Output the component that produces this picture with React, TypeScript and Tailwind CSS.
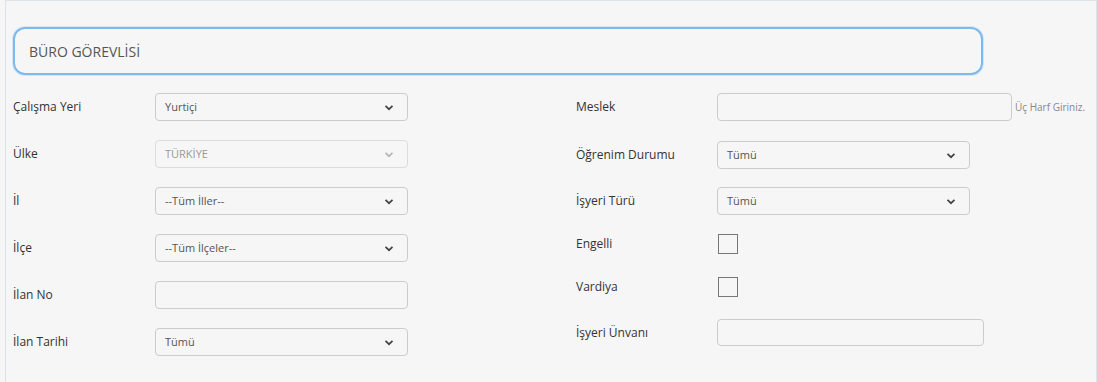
import React from "react";

const Chevron = ({ muted }: { muted?: boolean }) => (
  <svg width="10" height="7" viewBox="0 0 10 7" className="shrink-0">
    <path d="M1.5 1.8 L5 5.2 L8.5 1.8" fill="none" stroke={muted ? "#b5b5b5" : "#444"} strokeWidth="1.7" />
  </svg>
);

const Select = ({ value, width, disabled }: { value: string; width: string; disabled?: boolean }) => (
  <div
    className={`${width} h-[28px] flex items-center justify-between pl-[9px] pr-[13px] rounded-[4px] border ${
      disabled ? "border-[#dcdcdc] text-[#999]" : "border-[#ccc] text-[#555]"
    } bg-[#f6f6f6] text-[11px]`}
  >
    <span>{value}</span>
    <Chevron muted={disabled} />
  </div>
);

const TextBox = ({ width, height = "h-[28px]" }: { width: string; height?: string }) => (
  <div className={`${width} ${height} rounded-[4px] border border-[#ccc] bg-[#f6f6f6]`} />
);

const Checkbox = () => <div className="w-[20px] h-[20px] border border-[#777] bg-[#f6f6f6]" />;

export default function App() {
  const leftRows = [
    { label: "Çalışma Yeri", el: <Select value="Yurtiçi" width="w-[253px]" /> },
    { label: "Ülke", el: <Select value="TÜRKİYE" width="w-[253px]" disabled /> },
    { label: "İl", el: <Select value="--Tüm İller--" width="w-[253px]" /> },
    { label: "İlçe", el: <Select value="--Tüm İlçeler--" width="w-[253px]" /> },
    { label: "İlan No", el: <TextBox width="w-[253px]" /> },
    { label: "İlan Tarihi", el: <Select value="Tümü" width="w-[253px]" /> },
  ];

  return (
    <div
      className="w-full h-[382px] bg-[#f6f6f6] text-[#333]"
      style={{ fontFamily: '"Open Sans", "Noto Sans", sans-serif' }}
    >
      <div className="ml-[5px] h-full border-l border-t border-r border-[#dde3ea]">
        <div className="pl-[7px] pt-[26px]">
          <div className="w-[970px] h-[48px] rounded-[12px] border-2 border-[#7db9ec] shadow-[0_0_0_1px_#d6e6f3] flex items-center pl-[14px] text-[14px] text-[#555]">
            BÜRO GÖREVLİSİ
          </div>
        </div>

        <div className="flex pl-[7px] mt-[18px]">
          <div className="w-[563px] flex flex-col gap-[19px]">
            {leftRows.map((r) => (
              <div key={r.label} className="h-[28px] flex items-center">
                <div className="w-[142px] text-[12px]">{r.label}</div>
                {r.el}
              </div>
            ))}
          </div>

          <div className="flex flex-col">
            <div className="h-[28px] flex items-center">
              <div className="w-[141px] text-[12px]">Meslek</div>
              <TextBox width="w-[295px]" />
              <span className="ml-[3px] text-[10px] text-[#888]">Üç Harf Giriniz.</span>
            </div>
            <div className="h-[28px] mt-[20px] flex items-center">
              <div className="w-[141px] text-[12px]">Öğrenim Durumu</div>
              <Select value="Tümü" width="w-[253px]" />
            </div>
            <div className="h-[28px] mt-[18px] flex items-center">
              <div className="w-[141px] text-[12px]">İşyeri Türü</div>
              <Select value="Tümü" width="w-[253px]" />
            </div>
            <div className="h-[20px] mt-[19px] flex items-center">
              <div className="w-[142px] text-[12px]">Engelli</div>
              <Checkbox />
            </div>
            <div className="h-[20px] mt-[23px] flex items-center">
              <div className="w-[142px] text-[12px]">Vardiya</div>
              <Checkbox />
            </div>
            <div className="h-[27px] mt-[22px] flex items-center">
              <div className="w-[141px] text-[12px]">İşyeri Ünvanı</div>
              <TextBox width="w-[267px]" height="h-[27px]" />
            </div>
          </div>
        </div>
      </div>
    </div>
  );
}
